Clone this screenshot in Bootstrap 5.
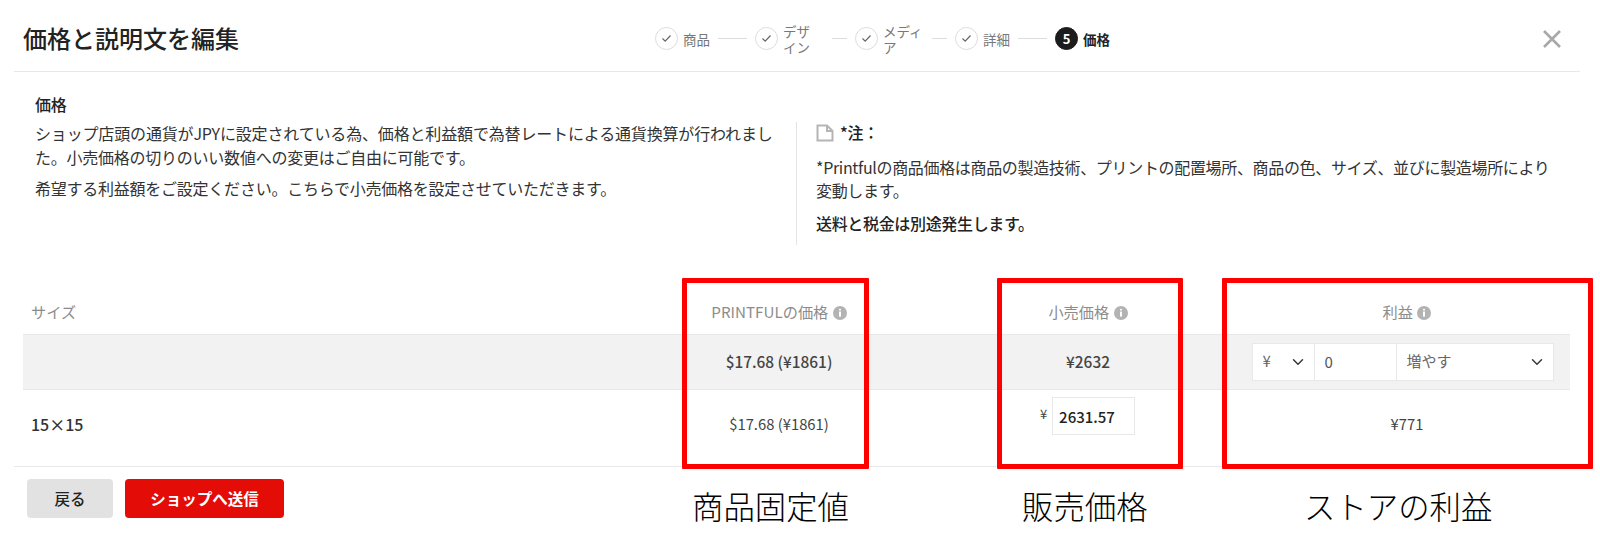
<!DOCTYPE html>
<html lang="ja">
<head>
    <meta charset="UTF-8">
    <meta name="viewport" content="width=device-width, initial-scale=1.0">
    <title>価格と説明文を編集</title>
    <link href="https://cdn.jsdelivr.net/npm/bootstrap@5.3.0/dist/css/bootstrap.min.css" rel="stylesheet">
    <style>
        body {
            font-family: "Noto Sans CJK JP", "Noto Sans", sans-serif;
            color: #333;
            height: 554px;
            overflow: hidden;
            position: relative;
        }
        .edit-head {
            height: 72px;
            margin: 0 20px 0 14px;
            padding: 6px 18px 0 9px;
            border-bottom: 1px solid #e8e8e8;
        }
        .edit-title {
            font-size: 24px;
            font-weight: 500;
            color: #222;
            margin: 0;
        }
        .stepper {
            margin-left: 416px;
            font-size: 13.5px;
            color: #777;
        }
        .step-dot {
            width: 23px;
            height: 23px;
            border: 1.5px solid #ddd;
            border-radius: 50%;
            flex-shrink: 0;
        }
        .step-now {
            background: #1c1c1c;
            border-color: #1c1c1c;
            color: #fff;
            font-size: 13px;
            font-weight: 700;
        }
        .step-label {
            margin-left: 5px;
            line-height: 16px;
        }
        .step-wrap1 { width: 27px; margin-right: 14px; }
        .step-wrap2 { width: 41px; }
        .step-line {
            height: 1px;
            background: #ddd;
            margin: 0 8px;
            flex-shrink: 0;
        }
        .line-long { width: 29px; }
        .line-short { width: 15px; }
        .close-x {
            line-height: 0;
        }
        .intro-wrap {
            padding: 20px 0 0 35px;
            font-size: 16px;
            letter-spacing: -.33px;
            line-height: 23.5px;
        }
        .intro-wrap h2 {
            font-size: 16px;
            font-weight: 500;
            color: #222;
            line-height: 24px;
            margin: 0 0 6px 0;
        }
        .intro-left {
            width: 761px;
            padding-right: 24px;
            letter-spacing: -.24px;
        }
        .intro-left p {
            margin-bottom: 8px;
        }
        .first-line {
            letter-spacing: -.16px;
        }
        .intro-right {
            height: 123px;
            padding-left: 19px;
            width: 765px;
            border-left: 1px solid #e5e5e5;
        }
        .intro-right p {
            margin-bottom: 9px;
        }
        .note-title {
            font-weight: 500;
            color: #222;
            line-height: 21.5px;
            margin-bottom: 12px;
            gap: 6px;
        }
        .note-bold {
            font-weight: 500;
            color: #222;
        }
        .price-table {
            table-layout: fixed;
            width: 1547px;
            margin: 45px 0 0 23px;
            font-size: 15.4px;
        }
        .price-table th, .price-table td {
            vertical-align: middle;
            border-color: #e8e8e8;
            padding: 0;
            text-align: center;
            color: #333;
            background: none;
            box-shadow: none;
        }
        .price-table .size-col {
            text-align: left;
            padding-left: 8px;
            width: 603px;
        }
        .col-printful { width: 306px; }
        .col-retail { width: 312px; }
        .price-table thead th {
            height: 44px;
            font-size: 15.2px;
            font-weight: 400;
            color: #8c8c8c;
            border-bottom: 1px solid #e8e8e8;
        }
        .price-table tr.all-row td {
            height: 55px;
            background: #f2f2f2;
            font-weight: 500;
            color: #444;
        }
        .price-table tr.all-row td.profit-cell {
            padding-right: 9px;
        }
        .price-table tr.item-row td {
            height: 77px;
            border-bottom: 0;
            padding-bottom: 7px;
            font-size: 14.8px;
            color: #444;
        }
        .price-table tr.item-row td.retail-td {
            padding-bottom: 23px;
        }
        .price-table tr.item-row .size-col {
            font-size: 16px;
            font-weight: 500;
            color: #333;
        }
        .info-dot {
            vertical-align: -2px;
            margin-left: 1px;
        }
        .profit-group {
            width: 302px;
            margin: 0 auto;
            flex-wrap: nowrap;
        }
        .profit-group .form-select, .profit-group .form-control {
            height: 38px;
            border-radius: 0;
            border: 1px solid #e8e8e8;
            font-size: 15px;
            color: #666;
            padding: 0 10px;
            box-shadow: none;
        }
        .profit-group .cur-select { flex: 0 0 63px; width: 63px; background-position: right 8px center; }
        .profit-group .form-control { flex: 0 0 83px; width: 83px; margin-left: -1px; color: #555; }
        .profit-group .way-select { flex: 1 1 auto; width: 1%; margin-left: -1px; background-position: right 8px center; }
        .retail-cell {
            padding-right: 1px;
        }
        .retail-yen {
            font-size: 13px;
            margin-right: 5px;
            position: relative;
            top: -3px;
        }
        .retail-input {
            width: 83px;
            height: 38px;
            border-radius: 0;
            border: 1px solid #e8e8e8;
            font-size: 15px;
            font-weight: 500;
            color: #222;
            padding: 0 6px;
        }
        .edit-foot {
            margin: 0 20px 0 14px;
            padding: 12px 0 0 13px;
            border-top: 1px solid #e8e8e8;
            gap: 12px;
        }
        .btn-back, .btn-send {
            height: 39px;
            font-size: 15.5px;
            border-radius: 4px;
            border: 0;
            padding: 0;
            font-weight: 500;
        }
        .btn-back {
            width: 86px;
            background: #e2e2e2;
            color: #222;
        }
        .btn-send {
            width: 159px;
            background: #e30c06;
            color: #fff;
            font-weight: 700;
        }
        /* red boxes and captions drawn over the screenshot */
        .mark-box {
            position: absolute;
            top: 278px;
            height: 191px;
            border: 5px solid #f00;
            border-radius: 1px;
        }
        .mark-a { left: 682px; width: 187px; }
        .mark-b { left: 997px; width: 186px; }
        .mark-c { left: 1222px; width: 371px; }
        .mark-text {
            position: absolute;
            top: 483px;
            font-size: 31.4px;
            line-height: 46px;
            font-weight: 300;
            color: #000;
            white-space: nowrap;
        }
        .text-a { left: 692px; }
        .text-b { left: 1022px; }
        .text-c { left: 1304px; }
    </style>
</head>
<body>
    <div class="edit-head d-flex align-items-center">
        <h1 class="edit-title">価格と説明文を編集</h1>
        <div class="stepper d-flex align-items-center">
            <div class="step-dot d-flex align-items-center justify-content-center">
                <svg width="11" height="9" viewBox="0 0 11 9"><path d="M1.5 4.5 4.2 7.2 9.5 1.5" fill="none" stroke="#666" stroke-width="1.2"/></svg>
            </div>
            <div class="step-label text-nowrap">商品</div>
            <div class="step-line line-long"></div>
            <div class="step-dot d-flex align-items-center justify-content-center">
                <svg width="11" height="9" viewBox="0 0 11 9"><path d="M1.5 4.5 4.2 7.2 9.5 1.5" fill="none" stroke="#666" stroke-width="1.2"/></svg>
            </div>
            <div class="step-label step-wrap1">デザイン</div>
            <div class="step-line line-short"></div>
            <div class="step-dot d-flex align-items-center justify-content-center">
                <svg width="11" height="9" viewBox="0 0 11 9"><path d="M1.5 4.5 4.2 7.2 9.5 1.5" fill="none" stroke="#666" stroke-width="1.2"/></svg>
            </div>
            <div class="step-label step-wrap2">メディア</div>
            <div class="step-line line-short"></div>
            <div class="step-dot d-flex align-items-center justify-content-center">
                <svg width="11" height="9" viewBox="0 0 11 9"><path d="M1.5 4.5 4.2 7.2 9.5 1.5" fill="none" stroke="#666" stroke-width="1.2"/></svg>
            </div>
            <div class="step-label text-nowrap">詳細</div>
            <div class="step-line line-long"></div>
            <div class="step-dot step-now d-flex align-items-center justify-content-center">5</div>
            <div class="step-label text-nowrap fw-bold text-dark">価格</div>
        </div>
        <div class="close-x ms-auto">
            <svg width="20" height="20" viewBox="0 0 20 20"><path d="M2 2 18 18M18 2 2 18" stroke="#a8a8a8" stroke-width="2.6" fill="none"/></svg>
        </div>
    </div>

    <div class="intro-wrap">
        <h2>価格</h2>
        <div class="d-flex">
            <div class="intro-left">
                <p><span class="first-line d-block text-nowrap">ショップ店頭の通貨がJPYに設定されている為、価格と利益額で為替レートによる通貨換算が行われまし</span>た。小売価格の切りのいい数値への変更はご自由に可能です。</p>
                <p>希望する利益額をご設定ください。こちらで小売価格を設定させていただきます。</p>
            </div>
            <div class="intro-right">
                <div class="note-title d-flex align-items-center">
                    <svg width="18" height="18" viewBox="0 0 18 18"><path d="M1.5 1.5H11L16.5 7V16.5H1.5ZM11 1.5V7H16.5" fill="none" stroke="#b5b5b5" stroke-width="2"/></svg>
                    <span>*注：</span>
                </div>
                <p>*Printfulの商品価格は商品の製造技術、プリントの配置場所、商品の色、サイズ、並びに製造場所により変動します。</p>
                <p class="note-bold">送料と税金は別途発生します。</p>
            </div>
        </div>
    </div>

    <table class="table price-table mb-0">
        <thead>
            <tr>
                <th class="size-col">サイズ</th>
                <th class="col-printful">PRINTFULの価格
                    <svg class="info-dot" width="14" height="14" viewBox="0 0 14 14"><circle cx="7" cy="7" r="7" fill="#b3b3b3"/><circle cx="7" cy="3.8" r="1" fill="#fff"/><rect x="6" y="5.6" width="2" height="5" fill="#fff"/></svg>
                </th>
                <th class="col-retail">小売価格
                    <svg class="info-dot" width="14" height="14" viewBox="0 0 14 14"><circle cx="7" cy="7" r="7" fill="#b3b3b3"/><circle cx="7" cy="3.8" r="1" fill="#fff"/><rect x="6" y="5.6" width="2" height="5" fill="#fff"/></svg>
                </th>
                <th>利益
                    <svg class="info-dot" width="14" height="14" viewBox="0 0 14 14"><circle cx="7" cy="7" r="7" fill="#b3b3b3"/><circle cx="7" cy="3.8" r="1" fill="#fff"/><rect x="6" y="5.6" width="2" height="5" fill="#fff"/></svg>
                </th>
            </tr>
        </thead>
        <tbody>
            <tr class="all-row">
                <td class="size-col"></td>
                <td>$17.68 (¥1861)</td>
                <td>¥2632</td>
                <td class="profit-cell">
                    <div class="input-group profit-group">
                        <select class="form-select cur-select"><option>¥</option></select>
                        <input class="form-control" type="text" value="0">
                        <select class="form-select way-select"><option>増やす</option></select>
                    </div>
                </td>
            </tr>
            <tr class="item-row">
                <td class="size-col">15×15</td>
                <td>$17.68 (¥1861)</td>
                <td class="retail-td">
                    <div class="retail-cell d-flex justify-content-center align-items-center">
                        <span class="retail-yen">¥</span>
                        <input class="form-control retail-input" type="text" value="2631.57">
                    </div>
                </td>
                <td>¥771</td>
            </tr>
        </tbody>
    </table>

    <div class="edit-foot d-flex">
        <button class="btn btn-back" type="button">戻る</button>
        <button class="btn btn-send" type="button">ショップへ送信</button>
    </div>

    <div class="mark-box mark-a"></div>
    <div class="mark-box mark-b"></div>
    <div class="mark-box mark-c"></div>
    <div class="mark-text text-a">商品固定値</div>
    <div class="mark-text text-b">販売価格</div>
    <div class="mark-text text-c">ストアの利益</div>
</body>
</html>
